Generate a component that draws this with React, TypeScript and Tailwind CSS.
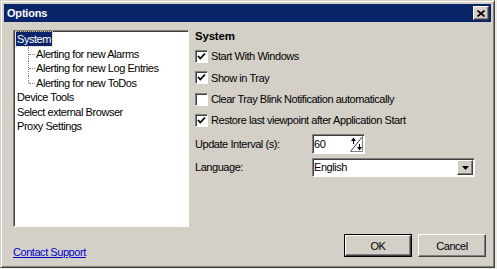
import { FC, ReactNode } from "react"

const raised =
  "border border-t-white border-l-white border-r-[#404040] border-b-[#404040] shadow-[inset_-1px_-1px_0_#808080]"
const sunken =
  "border border-t-[#808080] border-l-[#808080] border-r-white border-b-white shadow-[inset_1px_1px_0_#404040]"

const CheckBox: FC<{ checked?: boolean; children: ReactNode }> = ({ checked, children }) => (
  <div className="flex items-center h-[13px]">
    <div className={`w-[13px] h-[13px] bg-white ${sunken} flex items-center justify-center`}>
      {checked && (
        <svg width="9" height="9" viewBox="0 0 9 9">
          <polyline points="1,4 3.3,6.5 8,1.5" fill="none" stroke="#000" strokeWidth="1.8" />
        </svg>
      )}
    </div>
    <span className="ml-[3px]">{children}</span>
  </div>
)

const TreeChild: FC<{ label: string; last?: boolean }> = ({ label, last }) => (
  <div className="relative h-[14.5px] leading-[14.5px] pl-[20px]">
    <span
      className={`absolute left-[12px] top-0 border-l border-dotted border-[#808080] ${last ? "h-[7px]" : "h-full"}`}
    />
    <span className="absolute left-[13px] top-[7px] w-[6px] border-t border-dotted border-[#808080]" />
    {label}
  </div>
)

export default function App() {
  return (
    <div
      className="w-[497px] h-[269px] bg-[#ecebe7] text-[11px] tracking-[-0.45px] text-black"
      style={{ fontFamily: '"Liberation Sans", Arial, sans-serif' }}
    >
      <div className="w-[495px] h-[268px] bg-[#d4d0c8] border border-t-[#d4d0c8] border-l-[#d4d0c8] border-r-[#404040] border-b-[#404040] shadow-[inset_1px_1px_0_#fff,inset_-1px_-1px_0_#808080] p-[3px] flex flex-col">
        {/* title bar */}
        <div className="h-[18px] bg-[#0a246a] flex items-center justify-between pl-[3px] pr-[2px]">
          <span className="text-white font-bold text-[11px] tracking-[-0.2px]">Options</span>
          <div className={`w-[16px] h-[14px] bg-[#d4d0c8] ${raised} flex items-center justify-center`}>
            <svg width="8" height="7" viewBox="0 0 8 7">
              <path d="M0.5 0.5 L7.5 6.5 M7.5 0.5 L0.5 6.5" stroke="#000" strokeWidth="1.6" />
            </svg>
          </div>
        </div>

        <div className="flex-1 flex flex-col pl-[9px] pr-[5px] pt-[8px]">
          <div className="flex gap-[6px]">
            {/* tree */}
            <div className={`w-[176px] h-[197px] bg-white ${sunken} pl-[2px] pt-[1px]`}>
              <div className="h-[14.5px] leading-[14.5px]">
                <span className="inline-block bg-[#0a246a] text-white px-[1px] leading-[14px] outline outline-1 outline-dotted outline-[#d4d0c8]">
                  System
                </span>
              </div>
              <TreeChild label="Alerting for new Alarms" />
              <TreeChild label="Alerting for new Log Entries" />
              <TreeChild label="Alerting for new ToDos" last />
              <div className="h-[14.5px] leading-[14.5px] pl-[1px]">Device Tools</div>
              <div className="h-[14.5px] leading-[14.5px] pl-[1px]">Select external Browser</div>
              <div className="h-[14.5px] leading-[14.5px] pl-[1px]">Proxy Settings</div>
            </div>

            {/* settings */}
            <div className="flex-1 flex flex-col">
              <div className="font-bold text-[11.5px] tracking-[-0.2px] leading-[13px]">System</div>
              <div className="flex flex-col gap-[8.4px] mt-[7px]">
                <CheckBox checked>Start With Windows</CheckBox>
                <CheckBox checked>Show in Tray</CheckBox>
                <CheckBox>Clear Tray Blink Notification automatically</CheckBox>
                <CheckBox checked>Restore last viewpoint after Application Start</CheckBox>
              </div>

              <div className="flex items-center mt-[7px]">
                <span className="w-[117px]">Update Interval (s):</span>
                <div className={`w-[53px] h-[20px] bg-white ${sunken} flex items-center justify-between pl-[1px] pr-[1px]`}>
                  <span>60</span>
                  <svg width="13" height="16" viewBox="0 0 13 16">
                    <path d="M0.5 15.5 L12.5 0.5" stroke="#404040" strokeWidth="1" />
                    <path d="M12.5 0.5 V15.5 H0.5" stroke="#808080" fill="none" />
                    <path d="M3.5 1.5 L1 5 H6 Z" fill="#000" />
                    <rect x="3" y="4" width="1" height="4" fill="#000" />
                    <path d="M9.5 14.5 L7 11 H12 Z" fill="#000" />
                    <rect x="9" y="8" width="1" height="4" fill="#000" />
                  </svg>
                </div>
              </div>

              <div className="flex items-center mt-[4px]">
                <span className="w-[117px]">Language:</span>
                <div className={`w-[163px] h-[19px] bg-white ${sunken} flex items-center justify-between pl-[1px] pr-[1px]`}>
                  <span>English</span>
                  <div className={`w-[16px] h-[15px] bg-[#d4d0c8] ${raised} flex items-center justify-center`}>
                    <svg width="7" height="4" viewBox="0 0 7 4">
                      <path d="M0 0 H7 L3.5 4 Z" fill="#000" />
                    </svg>
                  </div>
                </div>
              </div>
            </div>
          </div>

          {/* footer */}
          <div className="flex items-center justify-between mt-[4px]">
            <span className="text-[#0000cc] underline mt-[13px]">Contact Support</span>
            <div className="flex gap-[6px]">
              <div className="border border-black">
                <div className={`w-[66px] h-[21px] ${raised} flex items-center justify-center`}>OK</div>
              </div>
              <div className={`w-[68px] h-[23px] ${raised} flex items-center justify-center`}>Cancel</div>
            </div>
          </div>
        </div>
      </div>
    </div>
  )
}
